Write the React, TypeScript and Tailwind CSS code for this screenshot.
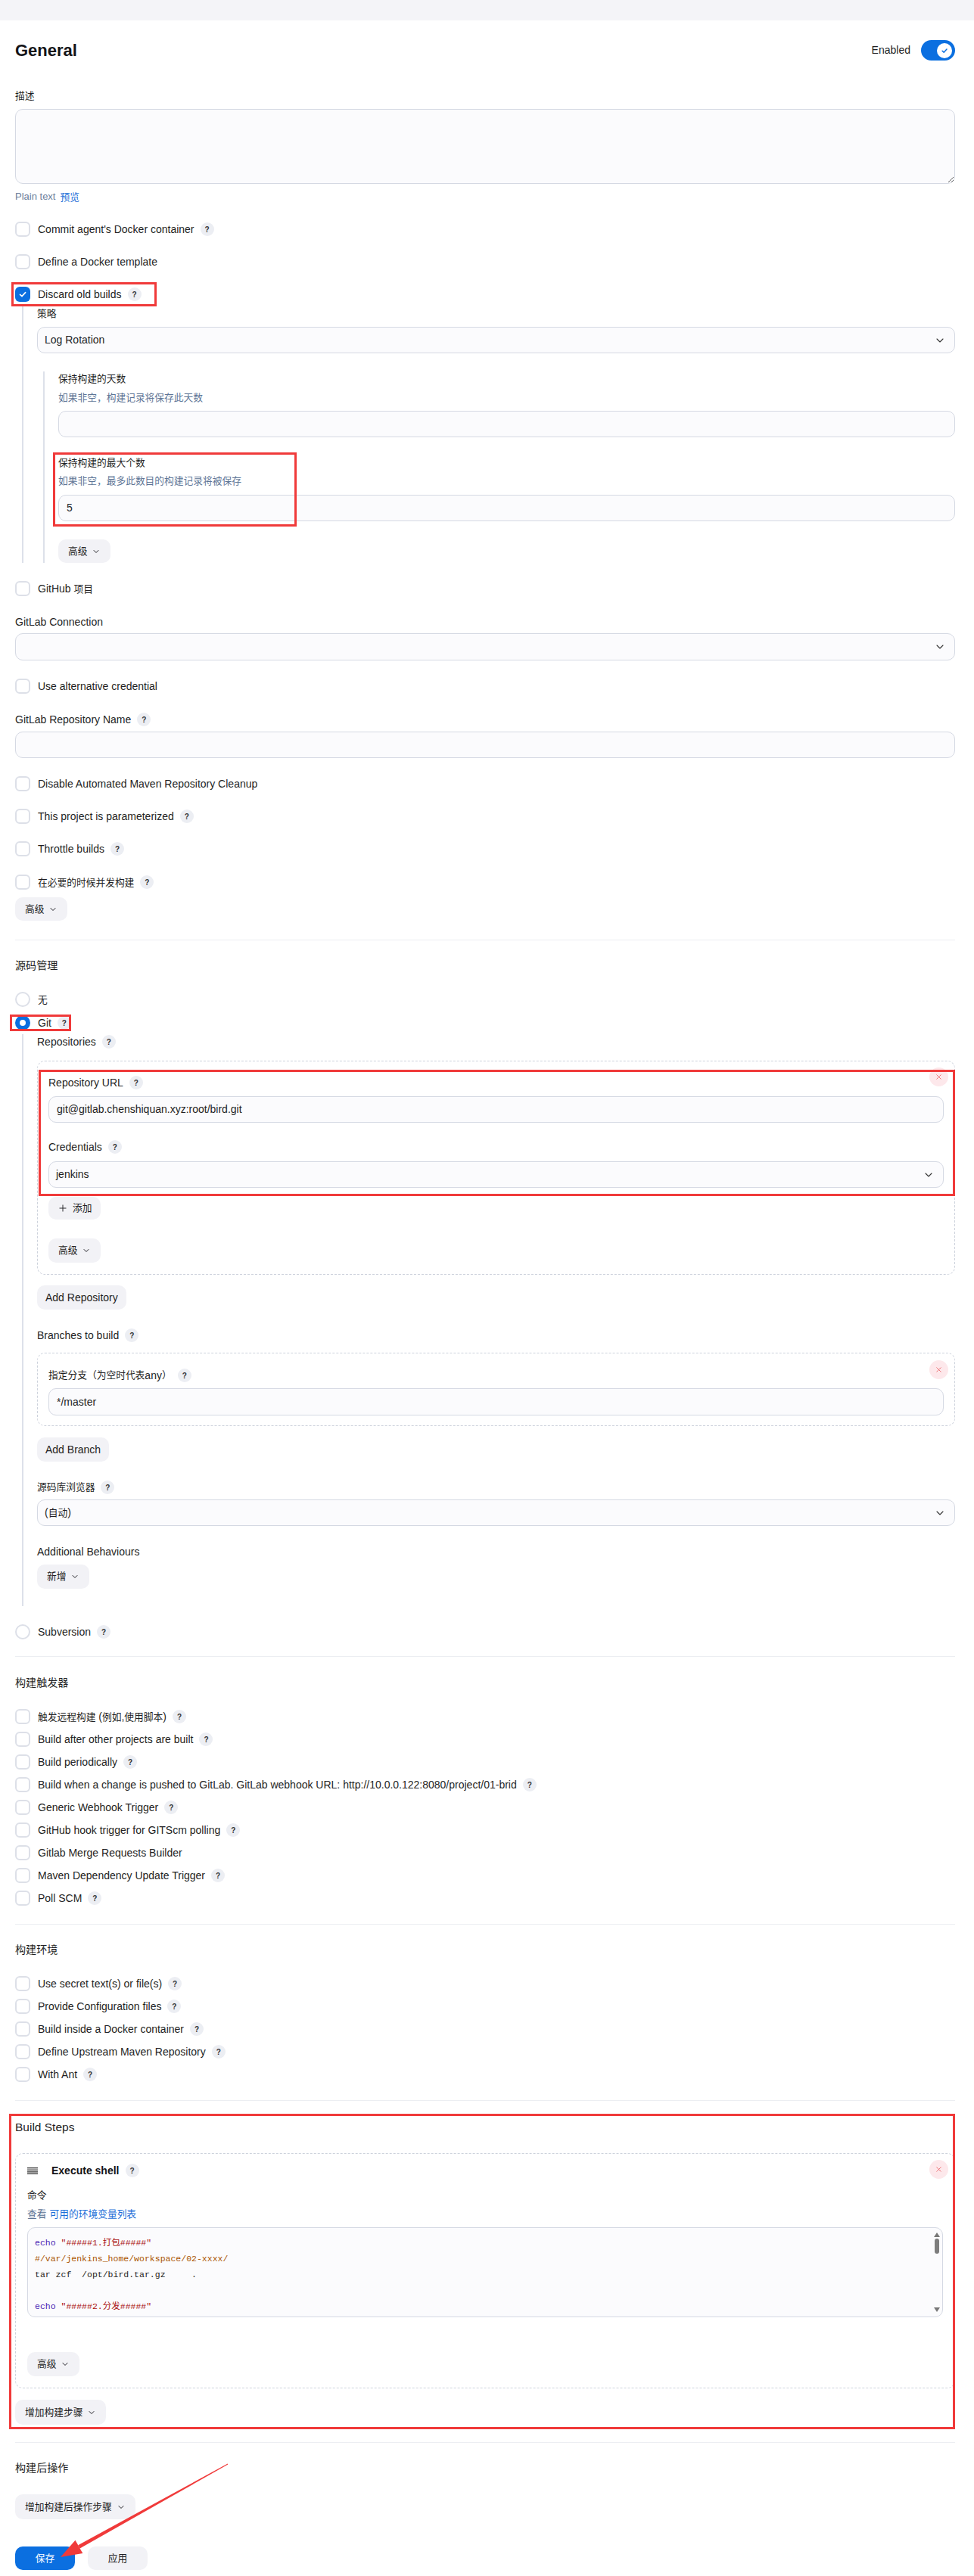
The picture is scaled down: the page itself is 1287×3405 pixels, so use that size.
import React from "react";
import { ChevronDown, Plus, X } from "lucide-react";

const FONT = { fontFamily: '"Liberation Sans", "Noto Sans CJK SC", sans-serif' };

// CJK runs are set a little smaller than the latin text, as in the screenshot
const CJK = /([\u2E80-\u9FFF\u3000-\u303F\uFF00-\uFFEF]+)/;
function T({ s }: { s: string }) {
  return (
    <>
      {s.split(CJK).map((p, i) =>
        CJK.test(p) ? (
          <span key={i} className="text-[0.91em]">
            {p}
          </span>
        ) : (
          p
        )
      )}
    </>
  );
}

function Help({ className = "ml-2" }: { className?: string }) {
  return (
    <span className={`inline-flex h-[18px] w-[18px] shrink-0 items-center justify-center rounded-full bg-[#eceef3] text-[10px] font-bold text-[#333] ${className}`}>
      ?
    </span>
  );
}

function CheckRow({ label, help, checked, className = "" }: { label: string; help?: boolean; checked?: boolean; className?: string }) {
  return (
    <div className={`flex h-5 items-center ${className}`}>
      {checked ? (
        <span className="flex h-5 w-5 items-center justify-center rounded-[6px] bg-[#0b6fe0]">
          <svg viewBox="0 0 12 12" className="h-3 w-3" fill="none" stroke="white" strokeWidth="1.6" strokeLinecap="round" strokeLinejoin="round">
            <path d="M2.5 6.3 5 8.6 9.6 3.6" />
          </svg>
        </span>
      ) : (
        <span className="h-5 w-5 rounded-[6px] border-2 border-[#dde0e8] bg-white" />
      )}
      <span className="ml-[10px] text-[14px] text-[#1f1f24]">
        <T s={label} />
      </span>
      {help && <Help />}
    </div>
  );
}

function Radio({ label, checked, help, className = "" }: { label: string; checked?: boolean; help?: boolean; className?: string }) {
  return (
    <div className={`flex h-5 items-center ${className}`}>
      {checked ? (
        <span className="h-5 w-5 rounded-full border-[6px] border-[#0b6fe0] bg-white" />
      ) : (
        <span className="h-5 w-5 rounded-full border-2 border-[#dde0e8] bg-white" />
      )}
      <span className="ml-[10px] text-[14px] text-[#1f1f24]">
        <T s={label} />
      </span>
      {help && <Help />}
    </div>
  );
}

function Label({ text, help, className = "" }: { text: string; help?: boolean; className?: string }) {
  return (
    <div className={`flex h-5 items-center text-[14px] text-[#1f1f24] ${className}`}>
      <T s={text} />
      {help && <Help />}
    </div>
  );
}

function Hint({ text, className = "" }: { text: string; className?: string }) {
  return (
    <div className={`flex h-5 items-center text-[14px] text-[#5e7596] ${className}`}>
      <T s={text} />
    </div>
  );
}

function Input({ value = "", h = "h-[35px]", className = "" }: { value?: string; h?: string; className?: string }) {
  return (
    <div className={`flex items-center rounded-[10px] border border-[#d5d9e3] bg-[#fbfbfd] px-[10px] text-[14px] text-[#1f1f24] ${h} ${className}`}>
      {value}
    </div>
  );
}

function Select({ value = "", h = "h-[35px]", className = "" }: { value?: string; h?: string; className?: string }) {
  return (
    <div className={`flex items-center justify-between rounded-[10px] border border-[#d5d9e3] bg-[#fbfbfd] pl-[9px] pr-[11px] text-[14px] text-[#1f1f24] ${h} ${className}`}>
      <span>
        <T s={value} />
      </span>
      <ChevronDown className="h-4 w-4 text-[#333]" strokeWidth={1.6} />
    </div>
  );
}

function Btn({ children, h = "h-[32px]", className = "" }: { children: React.ReactNode; h?: string; className?: string }) {
  return (
    <div className={`flex w-fit items-center rounded-[10px] bg-[#f2f2f6] text-[14px] text-[#1f1f24] ${h} ${className}`}>
      {children}
    </div>
  );
}

function DropBtn({ text, h, className = "" }: { text: string; h?: string; className?: string }) {
  return (
    <Btn h={h} className={`px-[13px] ${className}`}>
      <T s={text} />
      <ChevronDown className="ml-[6px] h-3 w-3" strokeWidth={2} />
    </Btn>
  );
}

function CloseBtn({ className = "" }: { className?: string }) {
  return (
    <span className={`absolute flex h-[25px] w-[25px] items-center justify-center rounded-full bg-[#fde8eb] ${className}`}>
      <X className="h-[11px] w-[11px] text-[#e5484d]" strokeWidth={1.6} />
    </span>
  );
}

function Divider({ className = "" }: { className?: string }) {
  return <div className={`h-px bg-[#eceef2] ${className}`} />;
}

function SectionTitle({ text, className = "" }: { text: string; className?: string }) {
  return (
    <div className={`flex h-5 items-center text-[15.5px] text-[#1f1f24] ${className}`}>
      <T s={text} />
    </div>
  );
}

export default function App() {
  return (
    <div className="relative min-h-[3405px] bg-white" style={FONT}>
      <div className="h-[27px] bg-[#f4f4f8]" />

      <div className="pl-5 pr-[25px]">
        {/* General */}
        <div className="mt-[26px] flex h-[27px] items-center justify-between">
          <h1 className="text-[22px] font-bold text-[#141418]">General</h1>
          <div className="flex items-center">
            <span className="text-[14px] text-[#1f1f24]">Enabled</span>
            <span className="ml-[14px] flex h-[27px] w-[45px] items-center justify-end rounded-full bg-[#0b6fe0] pr-[4px]">
              <span className="flex h-[20px] w-[20px] items-center justify-center rounded-full bg-white">
                <svg viewBox="0 0 12 12" className="h-[10px] w-[10px]" fill="none" stroke="#0b6fe0" strokeWidth="1.8" strokeLinecap="round" strokeLinejoin="round">
                  <path d="M2.5 6.3 5 8.6 9.6 3.6" />
                </svg>
              </span>
            </span>
          </div>
        </div>

        <Label text="描述" className="mt-[37px]" />
        <textarea className="mt-[7px] block h-[99px] w-full rounded-[10px] border border-[#d5d9e3] bg-[#fbfbfd]" />
        <div className="mt-[7px] flex h-5 items-center text-[13px]">
          <span className="text-[#6b7e9c]">Plain text</span>
          <span className="ml-[6px] text-[14px] text-[#1d6fd8]">
            <T s="预览" />
          </span>
        </div>

        <CheckRow label="Commit agent's Docker container" help className="mt-[23px]" />
        <CheckRow label="Define a Docker template" className="mt-[23px]" />
        <div className="relative mt-[23px]">
          <CheckRow label="Discard old builds" help checked />
          <div className="absolute -left-[5px] -top-[6px] h-[32px] w-[192px] border-[3px] border-[#f03a3a]" />
        </div>

        {/* discard sub block */}
        <div className="ml-[9px] mt-[6px] border-l-2 border-[#dde1ea] pl-[18px]">
          <Label text="策略" />
          <Select value="Log Rotation" className="mt-[7px]" />
          <div className="ml-[8px] mt-[24px] border-l-2 border-[#dde1ea] pl-[18px]">
            <Label text="保持构建的天数" />
            <Hint text="如果非空，构建记录将保存此天数" className="mt-[5px]" />
            <Input className="mt-[7px]" />
            <div className="relative mt-[24px]">
              <Label text="保持构建的最大个数" />
              <Hint text="如果非空，最多此数目的构建记录将被保存" className="mt-[4px]" />
              <Input value="5" className="mt-[8px]" />
              <div className="absolute -left-[7px] -top-[4px] h-[98px] w-[322px] border-[3px] border-[#f03a3a]" />
            </div>
            <DropBtn text="高级" h="h-[31px]" className="mt-[24px]" />
          </div>
        </div>

        <CheckRow label="GitHub 项目" className="mt-[24px]" />
        <Label text="GitLab Connection" className="mt-[24px]" />
        <Select h="h-[36px]" className="mt-[5px]" />
        <CheckRow label="Use alternative credential" className="mt-[24px]" />
        <Label text="GitLab Repository Name" help className="mt-[24px]" />
        <Input className="mt-[6px]" />
        <CheckRow label="Disable Automated Maven Repository Cleanup" className="mt-[24px]" />
        <CheckRow label="This project is parameterized" help className="mt-[23px]" />
        <CheckRow label="Throttle builds" help className="mt-[23px]" />
        <CheckRow label="在必要的时候并发构建" help className="mt-[24px]" />
        <DropBtn text="高级" h="h-[31px]" className="mt-[10px]" />

        <Divider className="mt-[25px]" />

        {/* 源码管理 */}
        <SectionTitle text="源码管理" className="mt-[24px]" />
        <Radio label="无" className="mt-[24px]" />
        <div className="relative mt-[11px]">
          <Radio label="Git" help checked />
          <div className="absolute -left-[7px] -top-[1px] h-[22px] w-[81px] border-[3px] border-[#f03a3a]" />
        </div>

        <div className="ml-[9px] mt-px border-l-2 border-[#dde1ea] pb-[23px] pl-[18px]">
          <Label text="Repositories" help className="mt-[5px]" />
          <div className="relative mt-[15px] rounded-[10px] border border-dashed border-[#cdd2dc] px-[14px] pb-[15px] pt-[18px]">
            <CloseBtn className="right-[8px] top-[8px]" />
            <Label text="Repository URL" help />
            <Input value="git@gitlab.chenshiquan.xyz:root/bird.git" className="mt-[8px]" />
            <Label text="Credentials" help className="mt-[22px]" />
            <Select value="jenkins" className="mt-[9px]" />
            <div className="absolute left-px right-[-1px] top-[11px] h-[167px] border-[3px] border-[#f03a3a]" />
            <Btn h="h-[30px]" className="mt-[12px] px-[12px]">
              <Plus className="mr-[6px] h-[14px] w-[14px]" strokeWidth={1.6} />
              <T s="添加" />
            </Btn>
            <DropBtn text="高级" className="mt-[25px]" />
          </div>
          <Btn className="mt-[14px] px-[11px]">Add Repository</Btn>
          <Label text="Branches to build" help className="mt-[24px]" />
          <div className="relative mt-[13px] rounded-[10px] border border-dashed border-[#cdd2dc] px-[14px] pb-[13px] pt-[19px]">
            <CloseBtn className="right-[8px] top-[9px]" />
            <Label text="指定分支（为空时代表any）" help />
            <Input value="*/master" h="h-[36px]" className="mt-[7px]" />
          </div>
          <Btn className="mt-[15px] px-[11px]">Add Branch</Btn>
          <Label text="源码库浏览器" help className="mt-[24px]" />
          <Select value="(自动)" className="mt-[6px]" />
          <Label text="Additional Behaviours" className="mt-[24px]" />
          <DropBtn text="新增" className="mt-[7px]" />
        </div>

        <Radio label="Subversion" help className="mt-[24px]" />
        <Divider className="mt-[22px]" />

        {/* 构建触发器 */}
        <SectionTitle text="构建触发器" className="mt-[25px]" />
        <div className="mt-[24px] flex flex-col gap-[10px]">
          <CheckRow label="触发远程构建 (例如,使用脚本)" help />
          <CheckRow label="Build after other projects are built" help />
          <CheckRow label="Build periodically" help />
          <CheckRow label="Build when a change is pushed to GitLab. GitLab webhook URL: http://10.0.0.122:8080/project/01-brid" help />
          <CheckRow label="Generic Webhook Trigger" help />
          <CheckRow label="GitHub hook trigger for GITScm polling" help />
          <CheckRow label="Gitlab Merge Requests Builder" />
          <CheckRow label="Maven Dependency Update Trigger" help />
          <CheckRow label="Poll SCM" help />
        </div>
        <Divider className="mt-[24px]" />

        {/* 构建环境 */}
        <SectionTitle text="构建环境" className="mt-[24px]" />
        <div className="mt-[24px] flex flex-col gap-[10px]">
          <CheckRow label="Use secret text(s) or file(s)" help />
          <CheckRow label="Provide Configuration files" help />
          <CheckRow label="Build inside a Docker container" help />
          <CheckRow label="Define Upstream Maven Repository" help />
          <CheckRow label="With Ant" help />
        </div>
        <Divider className="mt-[24px]" />

        {/* Build Steps */}
        <div className="relative mt-[25px]">
          <SectionTitle text="Build Steps" />
          <div className="relative mt-[24px] rounded-[10px] border border-dashed border-[#cdd2dc] px-[15px] pb-[15px] pt-[12px]">
            <CloseBtn className="right-[8px] top-[8px]" />
            <div className="flex h-5 items-center">
              <svg viewBox="0 0 14 9" className="h-[9px] w-[14px]" fill="#333">
                <rect x="0" y="0" width="14" height="1.3" />
                <rect x="0" y="2.6" width="14" height="1.3" />
                <rect x="0" y="5.2" width="14" height="1.3" />
                <rect x="0" y="7.7" width="14" height="1.3" />
              </svg>
              <span className="ml-[18px] text-[14px] font-bold text-[#141418]">Execute shell</span>
              <Help className="ml-[8px]" />
            </div>
            <Label text="命令" className="mt-[13px]" />
            <div className="mt-[4px] flex h-5 items-center text-[14px]">
              <span className="text-[#5e7596]">
                <T s="查看" />
              </span>
              <span className="ml-[4px] text-[#1d6fd8]">
                <T s="可用的环境变量列表" />
              </span>
            </div>
            <div
              className="relative mt-[8px] h-[119px] overflow-hidden rounded-[10px] border border-[#d5d9e3] bg-[#fbfbfd] pl-[9px] pt-[9px] text-[11.5px] leading-[21px]"
              style={{ fontFamily: '"Liberation Mono", "Noto Sans CJK SC", monospace' }}
            >
              <div className="whitespace-pre">
                <span className="text-[#4a1cb4]">echo</span> <span className="text-[#aa1111]">"#####1.打包#####"</span>
              </div>
              <div className="whitespace-pre text-[#aa5500]">#/var/jenkins_home/workspace/02-xxxx/</div>
              <div className="whitespace-pre text-[#1f1f24]">tar zcf  /opt/bird.tar.gz     .</div>
              <div className="whitespace-pre"> </div>
              <div className="whitespace-pre">
                <span className="text-[#4a1cb4]">echo</span> <span className="text-[#aa1111]">"#####2.分发#####"</span>
              </div>
              <div className="absolute bottom-[6px] right-[3px] top-[6px] flex w-[8px] flex-col items-center">
                <svg viewBox="0 0 8 6" className="h-[6px] w-[8px]" fill="#777">
                  <polygon points="4,0 8,6 0,6" />
                </svg>
                <div className="mt-[2px] h-[20px] w-[6px] rounded-[3px] bg-[#7d7d7d]" />
                <div className="flex-1" />
                <svg viewBox="0 0 8 6" className="h-[6px] w-[8px]" fill="#777">
                  <polygon points="0,0 8,0 4,6" />
                </svg>
              </div>
            </div>
            <DropBtn text="高级" className="mt-[46px]" />
          </div>
          <DropBtn text="增加构建步骤" h="h-[33px]" className="mt-[15px]" />
          <div className="pointer-events-none absolute -bottom-[6px] -left-[8px] -top-[8px] right-0 border-[3px] border-[#f03a3a]" />
        </div>

        <Divider className="mt-[23px]" />

        <SectionTitle text="构建后操作" className="mt-[24px]" />
        <DropBtn text="增加构建后操作步骤" h="h-[33px]" className="mt-[24px]" />

        <div className="mt-[36px] flex gap-[17px]">
          <div className="flex h-[31px] w-[79px] items-center justify-center rounded-[10px] bg-[#0b6fe0] text-[14px] text-white">
            <T s="保存" />
          </div>
          <div className="flex h-[31px] w-[79px] items-center justify-center rounded-[10px] bg-[#f2f2f6] text-[14px] text-[#1f1f24]">
            <T s="应用" />
          </div>
        </div>
      </div>

      {/* annotation arrow */}
      <svg className="pointer-events-none absolute left-[60px] top-[3240px]" width="260" height="150" viewBox="0 0 260 150">
        <polygon points="240.76,16.56 241.24,17.44 45.6,128.6 43.2,124.2" fill="#f03a3a" />
        <polygon points="20,140 49.3,135.1 39.5,117.7" fill="#f03a3a" />
      </svg>
    </div>
  );
}
